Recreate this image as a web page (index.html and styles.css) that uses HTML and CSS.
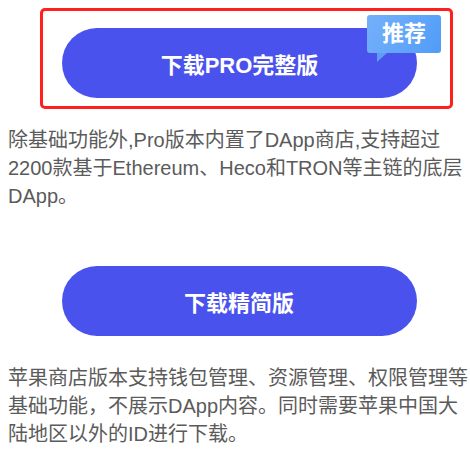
FILE: index.html
```html
<!DOCTYPE html>
<html lang="zh-CN">
<head>
  <meta charset="UTF-8" />
  <meta name="viewport" content="width=device-width, initial-scale=1.0"/>
  <title>下载</title>
  <link rel="stylesheet" href="styles.css">
</head>
<body>
  <div class="page">
    <div class="pro-box">
      <a class="btn" href="#">下载PRO完整版</a>
      <span class="badge">推荐</span>
    </div>
    <p class="desc desc-pro">除基础功能外,Pro版本内置了DApp商店,支持超过2200款基于Ethereum、Heco和TRON等主链的底层DApp。</p>

    <a class="btn btn-lite" href="#">下载精简版</a>
    <p class="desc desc-lite">苹果商店版本支持钱包管理、资源管理、权限管理等基础功能，不展示DApp内容。同时需要苹果中国大陆地区以外的ID进行下载。</p>
  </div>
</body>
</html>
```

FILE: styles.css
```css
body {
  margin: 0;
  padding: 0;
  background: #fff;
  font-family: "Liberation Sans", Arial, "Noto Sans CJK SC", sans-serif;
}

.page {
  padding: 8px 0 0 8px;
  display: flex;
  flex-direction: column;
}

.pro-box {
  position: relative;
  margin-left: 32px;
  width: 413px;
  height: 101px;
  box-sizing: border-box;
  border: 3px solid #ff1f1f;
  border-radius: 5px;
  padding-top: 17px;
}

.btn {
  display: flex;
  align-items: center;
  justify-content: center;
  width: 355px;
  height: 70px;
  border-radius: 35px;
  background: #4a52ee;
  color: #fff;
  font-size: 22px;
  font-weight: bold;
  text-decoration: none;
}

.pro-box .btn {
  margin-left: 19px;
}

.btn-lite {
  align-self: center;
  margin-top: 56px;
}

.badge {
  position: absolute;
  top: 4px;
  left: 324px;
  width: 74px;
  height: 38px;
  line-height: 38px;
  text-align: center;
  border-radius: 3px;
  background: linear-gradient(120deg, #74b0fa 0%, #62a6f9 55%, #4f9cf7 100%);
  color: #fff;
  font-size: 22px;
  font-weight: bold;
}

.badge::after {
  content: "";
  position: absolute;
  left: 10px;
  top: 38px;
  border-top: 9px solid #5d9ef3;
  border-right: 10px solid transparent;
}

.desc {
  margin: 17px 0 0;
  font-size: 20px;
  line-height: 28px;
  color: #5b5b5b;
}

.desc-lite {
  margin-top: 28px;
}
```
